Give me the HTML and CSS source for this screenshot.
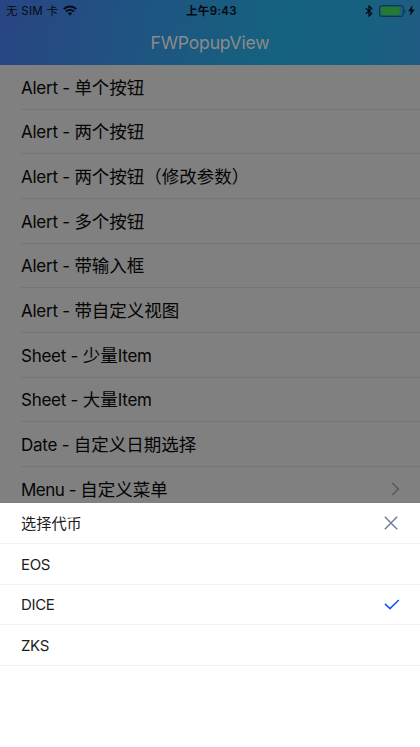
FILE: index.html
```html
<!DOCTYPE html>
<html lang="zh-CN">
<head>
<meta charset="utf-8">
<title>FWPopupView</title>
<link rel="stylesheet" href="styles.css">
</head>
<body>
<div class="screen">
  <header class="header">
    <div class="status">
      <div class="carrier"><span>无 SIM 卡</span>
        <svg class="wifi" width="14" height="11" viewBox="0 0 14 11"><g fill="none" stroke="#05090f" stroke-width="1.9"><path d="M.8 4a8.9 8.9 0 0 1 12.4 0"/><path d="M3 6.5a5.7 5.7 0 0 1 8 0"/></g><path d="M4.8 8.3a3.1 3.1 0 0 1 4.4 0L7 10.5z" fill="#05090f"/></svg>
      </div>
      <div class="time">上午9:43</div>
      <div class="power">
        <svg width="8" height="12" viewBox="0 0 8 12"><path d="M.8 3.2l6 5.2L4 11V1l2.8 2.6-6 5.2" fill="none" stroke="#05090f" stroke-width="1.2"/></svg>
        <svg class="battery" width="27" height="12" viewBox="0 0 27 12"><rect x=".6" y=".6" width="23.6" height="10.8" rx="2.4" fill="none" stroke="#0d3950" stroke-width="1.1"/><rect x="2" y="2" width="18.6" height="8" rx=".7" fill="#267a30"/><path d="M25.2 4v4q1.3-.5 1.3-2t-1.3-2" fill="#0d3950"/></svg>
        <svg class="bolt" width="7" height="11" viewBox="0 0 7 11"><path d="M4.6 0L.3 6.2h2.5L2 11l4.6-6.5H4z" fill="#05090f"/></svg>
      </div>
    </div>
    <h1 class="title">FWPopupView</h1>
  </header>
  <main class="list">
    <div class="row"><span class="latin">Alert - </span>单个按钮</div>
    <div class="row"><span class="latin">Alert - </span>两个按钮</div>
    <div class="row"><span class="latin">Alert - </span>两个按钮（修改参数）</div>
    <div class="row"><span class="latin">Alert - </span>多个按钮</div>
    <div class="row"><span class="latin">Alert - </span>带输入框</div>
    <div class="row"><span class="latin">Alert - </span>带自定义视图</div>
    <div class="row"><span class="latin">Sheet - </span>少量<span class="latin">Item</span></div>
    <div class="row"><span class="latin">Sheet - </span>大量<span class="latin">Item</span></div>
    <div class="row"><span class="latin">Date - </span>自定义日期选择</div>
    <div class="row"><span class="latin tight">Menu - </span>自定义菜单<svg class="chevron" width="9" height="14" viewBox="0 0 9 14"><path d="M1.3 1l6 6-6 6" fill="none" stroke="#5a5a5c" stroke-width="1.6"/></svg></div>
  </main>
  <section class="sheet">
    <div class="option heading">选择代币
      <svg class="close" width="14" height="14" viewBox="0 0 14 14"><path d="M.8.8l12.4 12.4M13.2.8L.8 13.2" fill="none" stroke="#6b7a95" stroke-width="1.4"/></svg>
    </div>
    <div class="option">EOS</div>
    <div class="option">DICE
      <svg class="check" width="16" height="11" viewBox="0 0 16 11"><path d="M1 4.8l5 4.8L14.8 1" fill="none" stroke="#1257f0" stroke-width="1.6"/></svg>
    </div>
    <div class="option">ZKS</div>
  </section>
</div>
</body>
</html>
```
FILE: styles.css
```css
* { box-sizing: border-box; }
body { margin: 0; font-family: Inter, "Noto Sans CJK SC", sans-serif; }
.screen { width: 420px; height: 747px; overflow: hidden; display: flex; flex-direction: column; background: #808080; }
.header { flex: none; height: 65px; background: linear-gradient(100deg, #294583 0%, #1f5482 33%, #15627f 66%, #166180 85%, #215b83 100%); }
.status { height: 21px; padding: 0 5px 0 6px; display: grid; grid-template-columns: 1fr auto 1fr; align-items: center; font-size: 11.5px; line-height: 21px; color: #05090f; }
.carrier { display: flex; align-items: center; gap: 5px; white-space: nowrap; letter-spacing: 0.28px; }
.carrier span { padding-top: 1px; }
.wifi, .power svg { margin-bottom: 1px; }
.time { font-weight: 600; letter-spacing: 0.35px; padding: 1px 0 0 2px; }
.power { display: flex; align-items: center; justify-content: flex-end; }
.power .battery { margin-left: 6px; }
.power .bolt { margin-left: 2px; }
.title { margin: 0; text-align: center; font-size: 17.6px; font-weight: 400; line-height: 43px; letter-spacing: -0.2px; color: #8b8b8b; }
.list { flex: none; height: 438px; overflow: hidden; padding-left: 21px; }
.row { height: 44.67px; padding-top: 2px; display: flex; align-items: center; border-bottom: 1px solid #757576; font-size: 17.5px; line-height: 26px; color: #050505; white-space: pre; }
.latin { font-size: 17px; letter-spacing: -0.25px; }
.tight { letter-spacing: -0.5px; }
.chevron { margin: 0 20px 2px auto; }
.sheet { flex: 1; background: #fff; }
.option { height: 40.8px; padding: 2px 20px 0 21px; display: flex; align-items: center; justify-content: space-between; border-bottom: 1px solid #f3f3f3; font-size: 15px; line-height: 22px; letter-spacing: -0.35px; color: #1c1c1c; }
.option svg { margin-bottom: 1px; }
.heading { font-size: 15.2px; letter-spacing: 0; }
.close { margin-right: 2px; }
```
